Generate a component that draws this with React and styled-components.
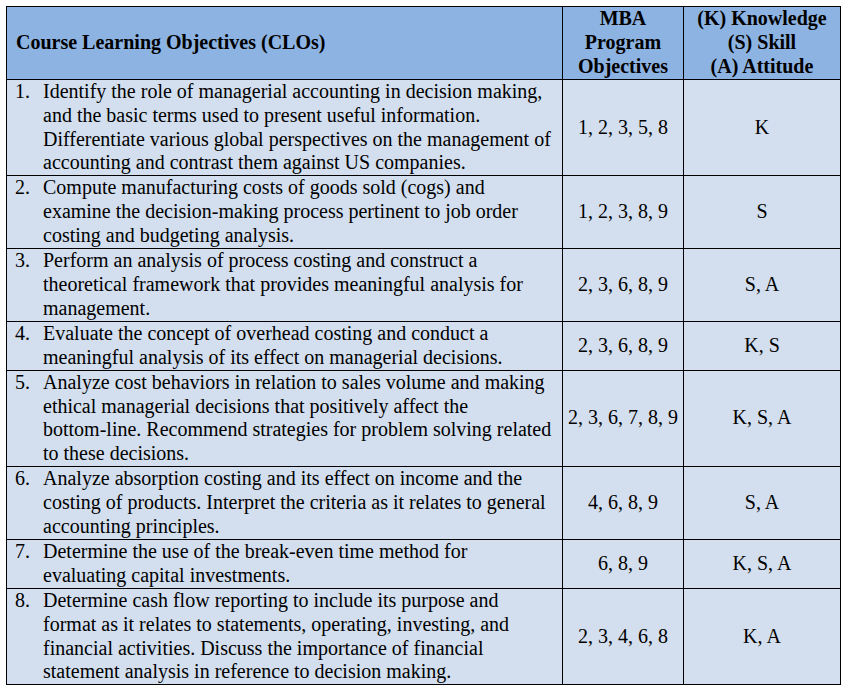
import React from 'react';
import styled, { createGlobalStyle } from 'styled-components';

const GlobalStyle = createGlobalStyle`
  * {
    box-sizing: border-box;
  }
  body {
    margin: 0;
    background: #ffffff;
    font-family: "Liberation Serif", "Times New Roman", serif;
    color: #000000;
  }
`;

const Page = styled.div`
  padding: 6px 0 0 6px;
`;

const Table = styled.div`
  display: grid;
  grid-template-columns: 556px 121px 157px;
  width: max-content;
  border-top: 1px solid #000;
  border-left: 1px solid #000;
  font-size: 20px;
  line-height: 23.9px;
`;

const Cell = styled.div`
  display: flex;
  align-items: center;
  justify-content: ${(p) => (p.$center ? 'center' : 'flex-start')};
  text-align: ${(p) => (p.$center ? 'center' : 'left')};
  padding: ${(p) => (p.$center ? '0 4px' : '0 8px 0 8px')};
  background: ${(p) => (p.$head ? '#8db3e2' : '#d3dfee')};
  font-weight: ${(p) => (p.$head ? 700 : 400)};
  border-right: 1px solid #000;
  border-bottom: 1px solid #000;
`;

const HeadTitle = styled.span`
  padding-left: 1px;
`;

const Item = styled.div`
  display: flex;
  width: 100%;
  align-self: flex-start;
`;

const Num = styled.span`
  flex: 0 0 28px;
`;

const Text = styled.span`
  flex: 1;
`;

const Nowrap = styled.span`
  white-space: nowrap;
`;

const withNowrap = (text) =>
  text.split(' ').map((word, i, all) => {
    const sep = i < all.length - 1 ? ' ' : '';
    if (word.includes('-')) {
      return (
        <React.Fragment key={i}>
          <Nowrap>{word}</Nowrap>
          {sep}
        </React.Fragment>
      );
    }
    return word + sep;
  });

const rows = [
  {
    text: 'Identify the role of managerial accounting in decision making, and the basic terms used to present useful information. Differentiate various global perspectives on the management of accounting and contrast them against US companies.',
    mba: '1, 2, 3, 5, 8',
    ksa: 'K',
  },
  {
    text: 'Compute manufacturing costs of goods sold (cogs) and examine the decision-making process pertinent to job order costing and budgeting analysis.',
    mba: '1, 2, 3, 8, 9',
    ksa: 'S',
  },
  {
    text: 'Perform an analysis of process costing and construct a theoretical framework that provides meaningful analysis for management.',
    mba: '2, 3, 6, 8, 9',
    ksa: 'S, A',
  },
  {
    text: 'Evaluate the concept of overhead costing and conduct a meaningful analysis of its effect on managerial decisions.',
    mba: '2, 3, 6, 8, 9',
    ksa: 'K, S',
  },
  {
    text: 'Analyze cost behaviors in relation to sales volume and making ethical managerial decisions that positively affect the bottom-line. Recommend strategies for problem solving related to these decisions.',
    mba: '2, 3, 6, 7, 8, 9',
    ksa: 'K, S, A',
  },
  {
    text: 'Analyze absorption costing and its effect on income and the costing of products. Interpret the criteria as it relates to general accounting principles.',
    mba: '4, 6, 8, 9',
    ksa: 'S, A',
  },
  {
    text: 'Determine the use of the break-even time method for evaluating capital investments.',
    mba: '6, 8, 9',
    ksa: 'K, S, A',
  },
  {
    text: 'Determine cash flow reporting to include its purpose and format as it relates to statements, operating, investing, and financial activities. Discuss the importance of financial statement analysis in reference to decision making.',
    mba: '2, 3, 4, 6, 8',
    ksa: 'K, A',
  },
];

const App = () => {
  return (
    <Page>
      <GlobalStyle />
      <Table>
        <Cell $head>
          <HeadTitle>Course Learning Objectives (CLOs)</HeadTitle>
        </Cell>
        <Cell $head $center>MBA Program Objectives</Cell>
        <Cell $head $center>
          (K) Knowledge
          <br />
          (S) Skill
          <br />
          (A) Attitude
        </Cell>

        {rows.map((row, i) => (
          <React.Fragment key={i}>
            <Cell>
              <Item>
                <Num>{i + 1}.</Num>
                <Text>{withNowrap(row.text)}</Text>
              </Item>
            </Cell>
            <Cell $center>{row.mba}</Cell>
            <Cell $center>{row.ksa}</Cell>
          </React.Fragment>
        ))}
      </Table>
    </Page>
  );
};

export default App;
